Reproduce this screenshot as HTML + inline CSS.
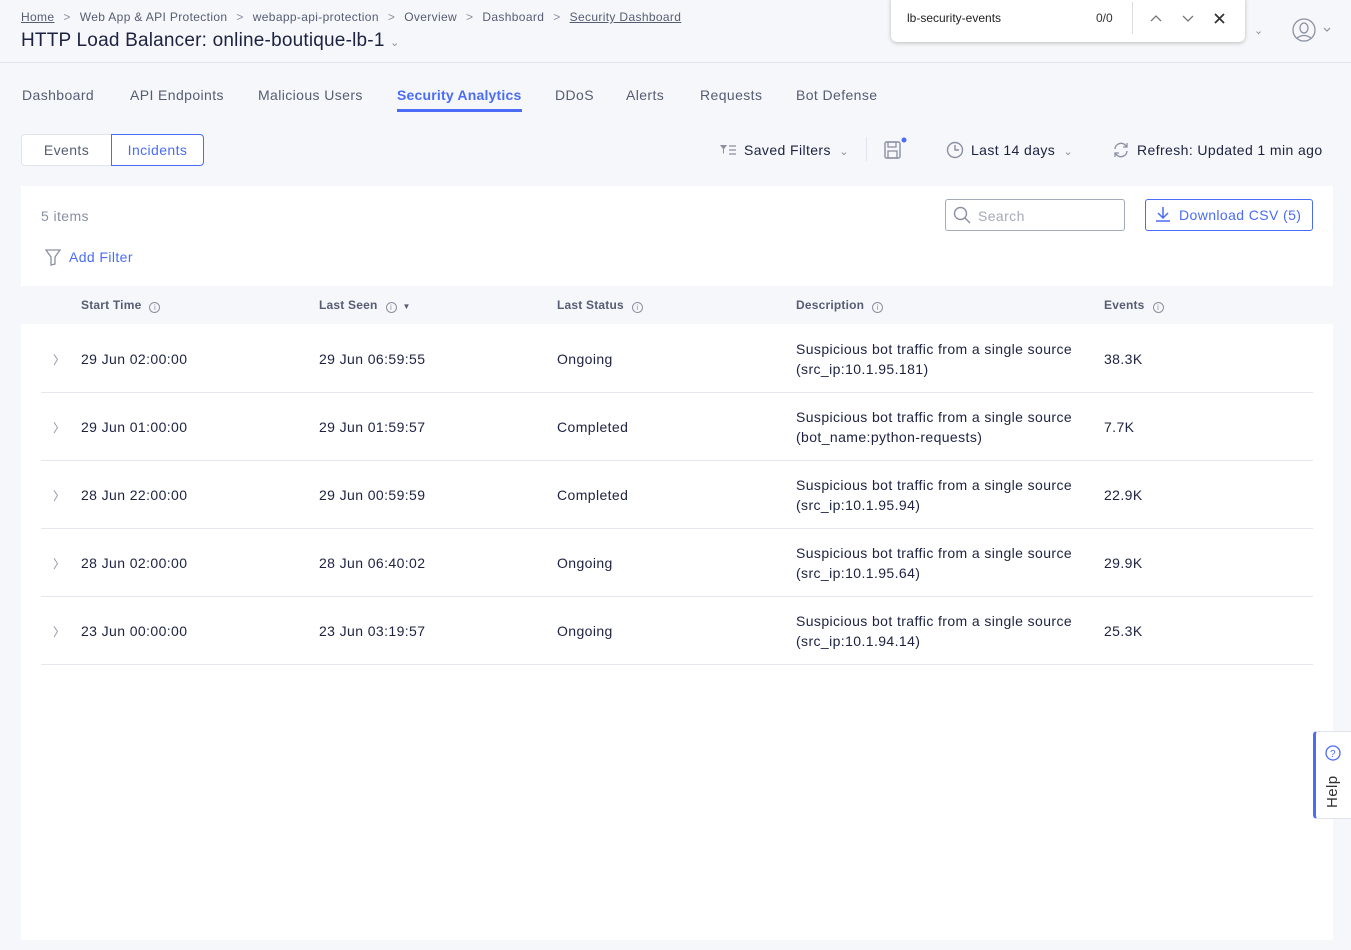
<!DOCTYPE html>
<html><head><meta charset="utf-8"><style>
*{box-sizing:border-box;margin:0;padding:0}
body{width:1351px;height:950px;background:#f6f7fa;font-family:"Liberation Sans",sans-serif;color:#1c2240;position:relative;overflow:hidden;letter-spacing:0.4px}
.abs{position:absolute;white-space:nowrap}
.bc{top:10px;left:21px;font-size:12px;color:#555d73;letter-spacing:0.35px}
.bc span.s{margin:0 9px;color:#8a90a2}
.bc u{text-decoration:underline}
.title{top:30px;left:21px;font-size:19px;color:#1c2240;letter-spacing:0.2px}
.hline{position:absolute;top:62px;left:0;width:1351px;height:1px;background:#e1e4ec}
.tab{top:87px;font-size:14px;color:#555d73}
.tab.act{color:#4a6cf7;font-weight:bold;letter-spacing:0.2px}
.seg{position:absolute;top:134px;height:32px;font-size:14px;display:flex;align-items:center;justify-content:center;background:#fff}
.card{position:absolute;left:21px;top:186px;width:1312px;height:754px;background:#fff}
.th{position:absolute;left:21px;top:286px;width:1312px;height:38px;background:#f6f7fa}
.hc{top:298px;font-size:12px;font-weight:bold;color:#555d73;letter-spacing:0.2px}
.info{display:inline-block;width:11px;height:11px;border:1px solid #8a90a2;border-radius:50%;margin-left:8px;vertical-align:-1px;font-size:8px;line-height:9px;text-align:center;color:#8a90a2;font-weight:normal}
.row{position:absolute;left:41px;width:1272px;height:68px;border-bottom:1px solid #e4e7ef}
.row div{position:absolute;font-size:14px;color:#1c2240;white-space:nowrap}
</style></head><body>
<div class="abs bc"><u>Home</u><span class="s">&gt;</span>Web App &amp; API Protection<span class="s">&gt;</span>webapp-api-protection<span class="s">&gt;</span>Overview<span class="s">&gt;</span>Dashboard<span class="s">&gt;</span><u>Security Dashboard</u></div>
<div class="abs title">HTTP Load Balancer: online-boutique-lb-1 <span style="font-size:11px;color:#8a90a2">&#8964;</span></div>
<div style="position:absolute;left:891px;top:-2px;width:354px;height:44px;background:#fff;border-radius:0 0 6px 6px;box-shadow:0 1px 4px rgba(0,0,0,.25)">
<div class="abs" style="left:16px;top:13px;font-size:12px;color:#222;letter-spacing:0">lb-security-events</div>
<div class="abs" style="left:205px;top:13px;font-size:12px;color:#333;letter-spacing:0">0/0</div>
<div style="position:absolute;left:241px;top:4px;width:1px;height:32px;background:#ddd"></div>
<svg class="abs" style="left:258px;top:13px" width="80" height="14"><path d="M2 10l5-5 5 5M34 5l5 5 5-5" fill="none" stroke="#777" stroke-width="1.3"/><path d="M66 3l9 9M75 3l-9 9" stroke="#333" stroke-width="1.8"/></svg>
</div>
<div class="abs" style="left:1254px;top:24px;font-size:11px;color:#8a90a2">&#8964;</div>
<svg class="abs" style="left:1291px;top:17px" width="44" height="26"><circle cx="13" cy="13" r="11" fill="none" stroke="#8a90a2" stroke-width="1.3"/><ellipse cx="13" cy="11" rx="4" ry="5" fill="none" stroke="#8a90a2" stroke-width="1.3"/><path d="M6 21q7-5 14 0" fill="none" stroke="#8a90a2" stroke-width="1.3"/><path d="M33 11l3 3 3-3" fill="none" stroke="#8a90a2" stroke-width="1.2"/></svg>
<div class="hline"></div>
<div class="abs tab" style="left:22px">Dashboard</div>
<div class="abs tab" style="left:130px">API Endpoints</div>
<div class="abs tab" style="left:258px">Malicious Users</div>
<div class="abs tab act" style="left:397px">Security Analytics</div>
<div style="position:absolute;left:397px;top:109px;width:125px;height:3px;background:#4a6cf7"></div>
<div class="abs tab" style="left:555px">DDoS</div>
<div class="abs tab" style="left:626px">Alerts</div>
<div class="abs tab" style="left:700px">Requests</div>
<div class="abs tab" style="left:796px">Bot Defense</div>
<div class="seg" style="left:21px;width:91px;border:1px solid #e1e4ec;border-radius:4px 0 0 4px;color:#555d73">Events</div>
<div class="seg" style="left:111px;width:93px;border:1px solid #4a6cf7;border-radius:0 4px 4px 0;color:#4a6cf7">Incidents</div>
<svg class="abs" style="left:719px;top:144px" width="18" height="12"><path d="M1 1h7l-3 4v5l-1-1V5z" fill="#8a90a2"/><path d="M10 2h7M10 6h7M10 10h7" stroke="#8a90a2" stroke-width="1.3"/></svg>
<div class="abs" style="left:744px;top:142px;font-size:14px">Saved Filters <span style="font-size:11px;color:#8a90a2;margin-left:4px">&#8964;</span></div>
<div style="position:absolute;left:866px;top:137px;width:1px;height:24px;background:#e1e4ec"></div>
<svg class="abs" style="left:883px;top:136px" width="24" height="24"><rect x="2" y="6" width="15" height="16" rx="1.5" fill="none" stroke="#8a90a2" stroke-width="1.4"/><rect x="5" y="6" width="8" height="5" fill="none" stroke="#8a90a2" stroke-width="1.3"/><rect x="5" y="15" width="9" height="7" fill="none" stroke="#8a90a2" stroke-width="1.3"/><circle cx="21" cy="4" r="2.5" fill="#4a6cf7"/></svg>
<svg class="abs" style="left:946px;top:141px" width="18" height="18"><circle cx="9" cy="9" r="7.5" fill="none" stroke="#8a90a2" stroke-width="1.4"/><path d="M9 4v5h4" fill="none" stroke="#8a90a2" stroke-width="1.4"/></svg>
<div class="abs" style="left:971px;top:142px;font-size:14px">Last 14 days <span style="font-size:11px;color:#8a90a2;margin-left:4px">&#8964;</span></div>
<svg class="abs" style="left:1112px;top:141px" width="18" height="18"><path d="M3 8a6 6 0 0 1 11-3l1 1M15 10a6 6 0 0 1-11 3l-1-1" fill="none" stroke="#8a90a2" stroke-width="1.4"/><path d="M15 2v4h-4M3 16v-4h4" fill="none" stroke="#8a90a2" stroke-width="1.3"/></svg>
<div class="abs" style="left:1137px;top:142px;font-size:14px">Refresh: Updated 1 min ago</div>
<div class="card"></div>
<div class="abs" style="left:41px;top:208px;font-size:14px;color:#8a90a2">5 items</div>
<div style="position:absolute;left:945px;top:199px;width:180px;height:32px;border:1px solid #a5aab8;border-radius:3px"></div>
<svg class="abs" style="left:953px;top:206px" width="18" height="18"><circle cx="7.5" cy="7.5" r="6" fill="none" stroke="#8a90a2" stroke-width="1.4"/><path d="M12 12l5 5" stroke="#8a90a2" stroke-width="1.4"/></svg>
<div class="abs" style="left:978px;top:208px;font-size:14px;color:#a5aab8">Search</div>
<div style="position:absolute;left:1145px;top:199px;width:168px;height:32px;border:1px solid #4a6cf7;border-radius:3px"></div>
<svg class="abs" style="left:1155px;top:206px" width="16" height="16"><path d="M8 1v10M3 7l5 5 5-5M1 15h14" fill="none" stroke="#4a6cf7" stroke-width="1.5"/></svg>
<div class="abs" style="left:1179px;top:207px;font-size:14px;color:#4a6cf7">Download CSV (5)</div>
<svg class="abs" style="left:45px;top:249px" width="16" height="17"><path d="M1 1h14l-5 7v7l-4 1V8z" fill="none" stroke="#8a90a2" stroke-width="1.3"/></svg>
<div class="abs" style="left:69px;top:249px;font-size:14px;color:#4a6cf7">Add Filter</div>
<div class="th"></div>
<div class="abs hc" style="left:81px">Start Time<span class="info">i</span></div>
<div class="abs hc" style="left:319px">Last Seen<span class="info">i</span><span style="font-size:8px;color:#555d73;margin-left:6px">&#9660;</span></div>
<div class="abs hc" style="left:557px">Last Status<span class="info">i</span></div>
<div class="abs hc" style="left:796px">Description<span class="info">i</span></div>
<div class="abs hc" style="left:1104px">Events<span class="info">i</span></div>

<div class="row" style="top:325px"><div style="left:12px;top:26px;color:#8a90a2;font-size:12px">&#x232A;</div><div style="left:40px;top:26px">29 Jun 02:00:00</div><div style="left:278px;top:26px">29 Jun 06:59:55</div><div style="left:516px;top:26px">Ongoing</div><div style="left:755px;top:14px;line-height:20px">Suspicious bot traffic from a single source<br>(src_ip:10.1.95.181)</div><div style="left:1063px;top:26px">38.3K</div></div>
<div class="row" style="top:393px"><div style="left:12px;top:26px;color:#8a90a2;font-size:12px">&#x232A;</div><div style="left:40px;top:26px">29 Jun 01:00:00</div><div style="left:278px;top:26px">29 Jun 01:59:57</div><div style="left:516px;top:26px">Completed</div><div style="left:755px;top:14px;line-height:20px">Suspicious bot traffic from a single source<br>(bot_name:python-requests)</div><div style="left:1063px;top:26px">7.7K</div></div>
<div class="row" style="top:461px"><div style="left:12px;top:26px;color:#8a90a2;font-size:12px">&#x232A;</div><div style="left:40px;top:26px">28 Jun 22:00:00</div><div style="left:278px;top:26px">29 Jun 00:59:59</div><div style="left:516px;top:26px">Completed</div><div style="left:755px;top:14px;line-height:20px">Suspicious bot traffic from a single source<br>(src_ip:10.1.95.94)</div><div style="left:1063px;top:26px">22.9K</div></div>
<div class="row" style="top:529px"><div style="left:12px;top:26px;color:#8a90a2;font-size:12px">&#x232A;</div><div style="left:40px;top:26px">28 Jun 02:00:00</div><div style="left:278px;top:26px">28 Jun 06:40:02</div><div style="left:516px;top:26px">Ongoing</div><div style="left:755px;top:14px;line-height:20px">Suspicious bot traffic from a single source<br>(src_ip:10.1.95.64)</div><div style="left:1063px;top:26px">29.9K</div></div>
<div class="row" style="top:597px"><div style="left:12px;top:26px;color:#8a90a2;font-size:12px">&#x232A;</div><div style="left:40px;top:26px">23 Jun 00:00:00</div><div style="left:278px;top:26px">23 Jun 03:19:57</div><div style="left:516px;top:26px">Ongoing</div><div style="left:755px;top:14px;line-height:20px">Suspicious bot traffic from a single source<br>(src_ip:10.1.94.14)</div><div style="left:1063px;top:26px">25.3K</div></div>

<div style="position:absolute;left:1313px;top:731px;width:40px;height:88px;background:#fff;border:1px solid #e1e4ec;border-left:3px solid #4a6cf7;border-radius:4px 0 0 4px"></div>
<svg class="abs" style="left:1325px;top:745px" width="16" height="16"><circle cx="8" cy="8" r="7" fill="none" stroke="#4a6cf7" stroke-width="1.3"/><text x="8" y="12" font-size="10" text-anchor="middle" fill="#4a6cf7" font-family="Liberation Sans">?</text></svg>
<div class="abs" style="left:1324px;top:808px;font-size:15px;color:#333;transform:rotate(-90deg);transform-origin:0 0">Help</div>
</body></html>
